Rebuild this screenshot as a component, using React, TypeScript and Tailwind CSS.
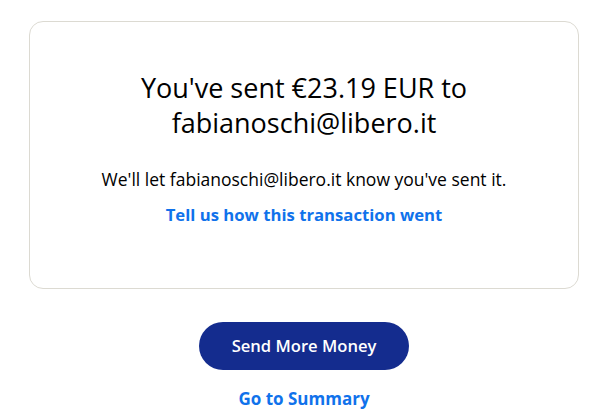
import React from "react";

export default function App() {
  return (
    <div className="w-[608px] h-[414px] bg-white flex flex-col items-center font-['Open_Sans',sans-serif]">
      <div className="mt-[21px] w-[550px] h-[268px] rounded-[14px] border border-[#dcdad2] flex flex-col items-center pt-[48px]">
        <h1 className="text-[27px] leading-[35px] text-[#000000] text-center w-[360px] font-normal">
          You've sent €23.19 EUR to fabianoschi@libero.it
        </h1>
        <p className="mt-[27px] text-[17.5px] leading-[24px] text-[#000000] whitespace-nowrap">
          We'll let fabianoschi@libero.it know you've sent it.
        </p>
        <a className="mt-[12px] text-[16.7px] leading-[24px] font-bold text-[#1072eb]">
          Tell us how this transaction went
        </a>
      </div>
      <button className="mt-[33px] w-[210px] h-[48px] rounded-full bg-[#142c8e] text-white text-[16.6px] font-semibold">
        Send More Money
      </button>
      <a className="mt-[17px] text-[17px] leading-[24px] font-bold text-[#1072eb]">Go to Summary</a>
    </div>
  );
}
